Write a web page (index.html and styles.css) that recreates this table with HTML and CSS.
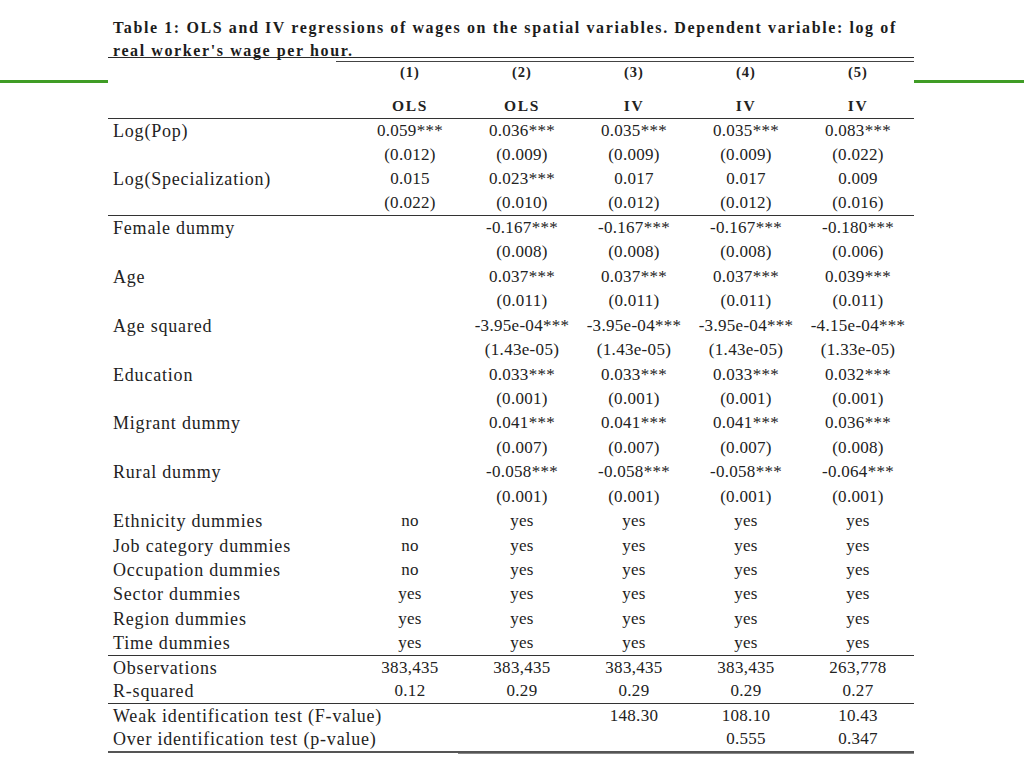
FILE: index.html
```html
<!DOCTYPE html>
<html lang="en">
<head>
<meta charset="utf-8">
<title>Table 1: OLS and IV regressions</title>
<link rel="stylesheet" href="styles.css">
</head>
<body>
<div class="page">
  <div class="deco deco-left"></div>
  <main class="sheet">
    <div class="title">Table 1: OLS and IV regressions of wages on the spatial variables. Dependent variable: log of<br>real worker's wage per hour.</div>
    <div class="rule-short"></div>
    <table class="reg">
      <colgroup>
        <col class="c-label"><col class="c-num"><col class="c-num"><col class="c-num"><col class="c-num"><col class="c-num">
      </colgroup>
      <thead>
        <tr class="h1"><th></th><th>(1)</th><th>(2)</th><th>(3)</th><th>(4)</th><th>(5)</th></tr>
        <tr class="h2"><th></th><th>OLS</th><th>OLS</th><th>IV</th><th>IV</th><th>IV</th></tr>
      </thead>
      <tbody class="g1">
        <tr><td>Log(Pop)</td><td>0.059***</td><td>0.036***</td><td>0.035***</td><td>0.035***</td><td>0.083***</td></tr>
        <tr><td></td><td>(0.012)</td><td>(0.009)</td><td>(0.009)</td><td>(0.009)</td><td>(0.022)</td></tr>
        <tr><td>Log(Specialization)</td><td>0.015</td><td>0.023***</td><td>0.017</td><td>0.017</td><td>0.009</td></tr>
        <tr><td></td><td>(0.022)</td><td>(0.010)</td><td>(0.012)</td><td>(0.012)</td><td>(0.016)</td></tr>
      </tbody>
      <tbody class="g2">
        <tr><td>Female dummy</td><td></td><td>-0.167***</td><td>-0.167***</td><td>-0.167***</td><td>-0.180***</td></tr>
        <tr><td></td><td></td><td>(0.008)</td><td>(0.008)</td><td>(0.008)</td><td>(0.006)</td></tr>
        <tr><td>Age</td><td></td><td>0.037***</td><td>0.037***</td><td>0.037***</td><td>0.039***</td></tr>
        <tr><td></td><td></td><td>(0.011)</td><td>(0.011)</td><td>(0.011)</td><td>(0.011)</td></tr>
        <tr><td>Age squared</td><td></td><td>-3.95e-04***</td><td>-3.95e-04***</td><td>-3.95e-04***</td><td>-4.15e-04***</td></tr>
        <tr><td></td><td></td><td>(1.43e-05)</td><td>(1.43e-05)</td><td>(1.43e-05)</td><td>(1.33e-05)</td></tr>
        <tr><td>Education</td><td></td><td>0.033***</td><td>0.033***</td><td>0.033***</td><td>0.032***</td></tr>
        <tr><td></td><td></td><td>(0.001)</td><td>(0.001)</td><td>(0.001)</td><td>(0.001)</td></tr>
        <tr><td>Migrant dummy</td><td></td><td>0.041***</td><td>0.041***</td><td>0.041***</td><td>0.036***</td></tr>
        <tr><td></td><td></td><td>(0.007)</td><td>(0.007)</td><td>(0.007)</td><td>(0.008)</td></tr>
        <tr><td>Rural dummy</td><td></td><td>-0.058***</td><td>-0.058***</td><td>-0.058***</td><td>-0.064***</td></tr>
        <tr><td></td><td></td><td>(0.001)</td><td>(0.001)</td><td>(0.001)</td><td>(0.001)</td></tr>
        <tr><td>Ethnicity dummies</td><td>no</td><td>yes</td><td>yes</td><td>yes</td><td>yes</td></tr>
        <tr><td>Job category dummies</td><td>no</td><td>yes</td><td>yes</td><td>yes</td><td>yes</td></tr>
        <tr><td>Occupation dummies</td><td>no</td><td>yes</td><td>yes</td><td>yes</td><td>yes</td></tr>
        <tr><td>Sector dummies</td><td>yes</td><td>yes</td><td>yes</td><td>yes</td><td>yes</td></tr>
        <tr><td>Region dummies</td><td>yes</td><td>yes</td><td>yes</td><td>yes</td><td>yes</td></tr>
        <tr><td>Time dummies</td><td>yes</td><td>yes</td><td>yes</td><td>yes</td><td>yes</td></tr>
      </tbody>
      <tbody class="short">
        <tr><td>Observations</td><td>383,435</td><td>383,435</td><td>383,435</td><td>383,435</td><td>263,778</td></tr>
        <tr><td>R-squared</td><td>0.12</td><td>0.29</td><td>0.29</td><td>0.29</td><td>0.27</td></tr>
      </tbody>
      <tbody class="short last">
        <tr><td>Weak identification test (F-value)</td><td></td><td></td><td>148.30</td><td>108.10</td><td>10.43</td></tr>
        <tr><td>Over identification test (p-value)</td><td></td><td></td><td></td><td>0.555</td><td>0.347</td></tr>
      </tbody>
    </table>
    <div class="rule-bottom"></div>
  </main>
  <div class="deco deco-right"></div>
</div>
</body>
</html>
```

FILE: styles.css
```css
html, body {
  margin: 0;
  padding: 0;
  background: #ffffff;
}

.page {
  display: flex;
  align-items: flex-start;
  width: 1024px;
  height: 768px;
  overflow: hidden;
  color: #222;
  font-family: "Liberation Serif", "Times New Roman", serif;
}

.deco {
  height: 3px;
  margin-top: 80px;
  background: #3f9c25;
}

.deco-left {
  width: 108px;
  flex: none;
}

.deco-right {
  flex: 1;
}

.sheet {
  width: 806px;
  flex: none;
}

.title {
  height: 41px;
  padding: 16px 0 0 5px;
  border-bottom: 1px solid #2a2a2a;
  font-weight: bold;
  font-size: 16px;
  line-height: 23px;
  letter-spacing: 1.6px;
  white-space: nowrap;
  color: #1c1c1c;
}

.rule-short {
  margin: 3px 0 0 228px;
  border-top: 1px solid #444;
}

.reg {
  width: 806px;
  table-layout: fixed;
  border-collapse: collapse;
}

.c-label {
  width: 246px;
}

.c-num {
  width: 112px;
}

.reg th {
  padding: 0;
  font-weight: bold;
  text-align: center;
  white-space: nowrap;
}

.h1 th {
  height: 20px;
  font-size: 14.5px;
  line-height: 20px;
  letter-spacing: 1px;
}

.h2 th {
  height: 36px;
  vertical-align: bottom;
  font-size: 15.5px;
  line-height: 24px;
  letter-spacing: 1.6px;
}

.reg tbody {
  border-top: 1px solid #333;
}

.reg tbody.last {
  border-bottom: 2px solid #555;
}

.reg td {
  height: 24.45px;
  padding: 0;
  box-sizing: border-box;
  text-align: center;
  white-space: nowrap;
  font-size: 17px;
  line-height: 22px;
  letter-spacing: 0.3px;
}

.reg tbody.g1 td {
  height: 24.3px;
}

.reg tbody.short td {
  height: 24px;
}

.reg td:first-child {
  padding-left: 5px;
  text-align: left;
  font-size: 18px;
  letter-spacing: 0.8px;
}

.rule-bottom {
  margin-left: 350px;
  border-top: 1px solid #888;
}
```
